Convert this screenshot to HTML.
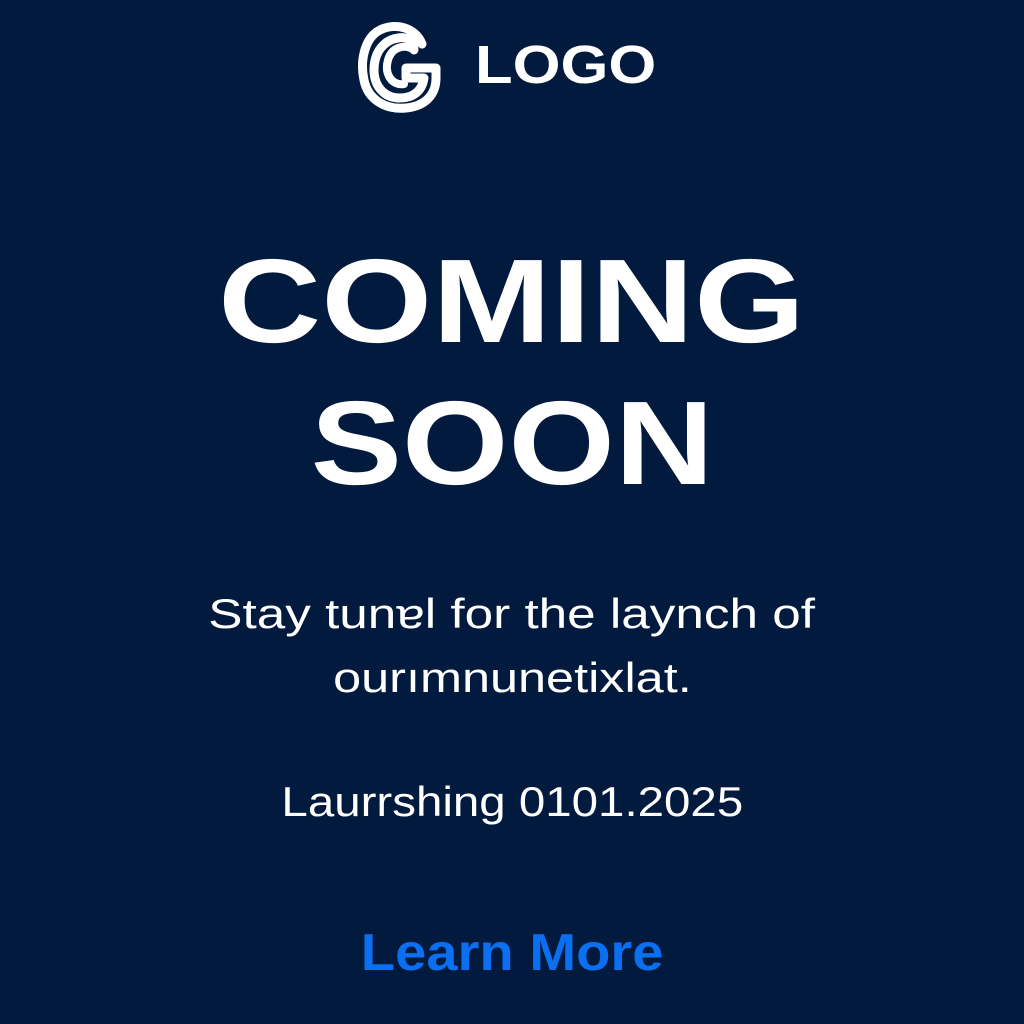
<!DOCTYPE html>
<html><head><style>
html,body{margin:0;padding:0;}
body{width:1024px;height:1024px;background:#021a3d;position:relative;overflow:hidden;font-family:"Liberation Sans",sans-serif;color:#fff;}
.t{position:absolute;left:0;width:1024px;text-align:center;white-space:nowrap;}
.t span{display:inline-block;transform-origin:center;}
</style></head><body>
<svg style="position:absolute;left:356px;top:16px" width="88" height="100" viewBox="0 0 88 100">
<path d="M66 28 C60 12 40 6 24 14 C8 22 4 46 8 64 C12 84 30 94 50 92 C70 90 80 78 80 62 L80 52 L50 52 L50 62 L68 62 C66 76 56 82 44 82 C28 82 18 70 18 54 C18 36 28 24 42 22 C52 20 58 26 58 34" fill="none" stroke="#fff" stroke-width="9" stroke-linecap="round" stroke-linejoin="round"/>
<path d="M58 34 C50 28 36 30 32 44 C28 58 36 70 48 68" fill="none" stroke="#fff" stroke-width="8" stroke-linecap="round"/>
</svg>
<div style="position:absolute;left:475px;top:34px;font-size:54px;font-weight:bold;transform:scaleX(1.14);transform-origin:left;">LOGO</div>
<div class="t" style="top:232px;font-size:119px;font-weight:bold;line-height:140px;"><span style="transform:scaleX(1.2)">COMING</span></div>
<div class="t" style="top:374px;font-size:119px;font-weight:bold;line-height:140px;"><span style="transform:scaleX(1.15)">SOON</span></div>
<div class="t" style="top:588px;font-size:42px;line-height:52px;"><span style="transform:scaleX(1.22)">Stay tunɐl for the laynch of</span></div>
<div class="t" style="top:652px;font-size:42px;line-height:52px;"><span style="transform:scaleX(1.2)">ourımnunetixlat.</span></div>
<div class="t" style="top:776px;font-size:42px;line-height:52px;"><span style="transform:scaleX(1.13)">Laurrshing 0101.2025</span></div>
<div class="t" style="top:922px;font-size:52px;font-weight:bold;color:#0a6ff0;line-height:62px;"><span style="transform:scaleX(1.08)">Learn More</span></div>
</body></html>
